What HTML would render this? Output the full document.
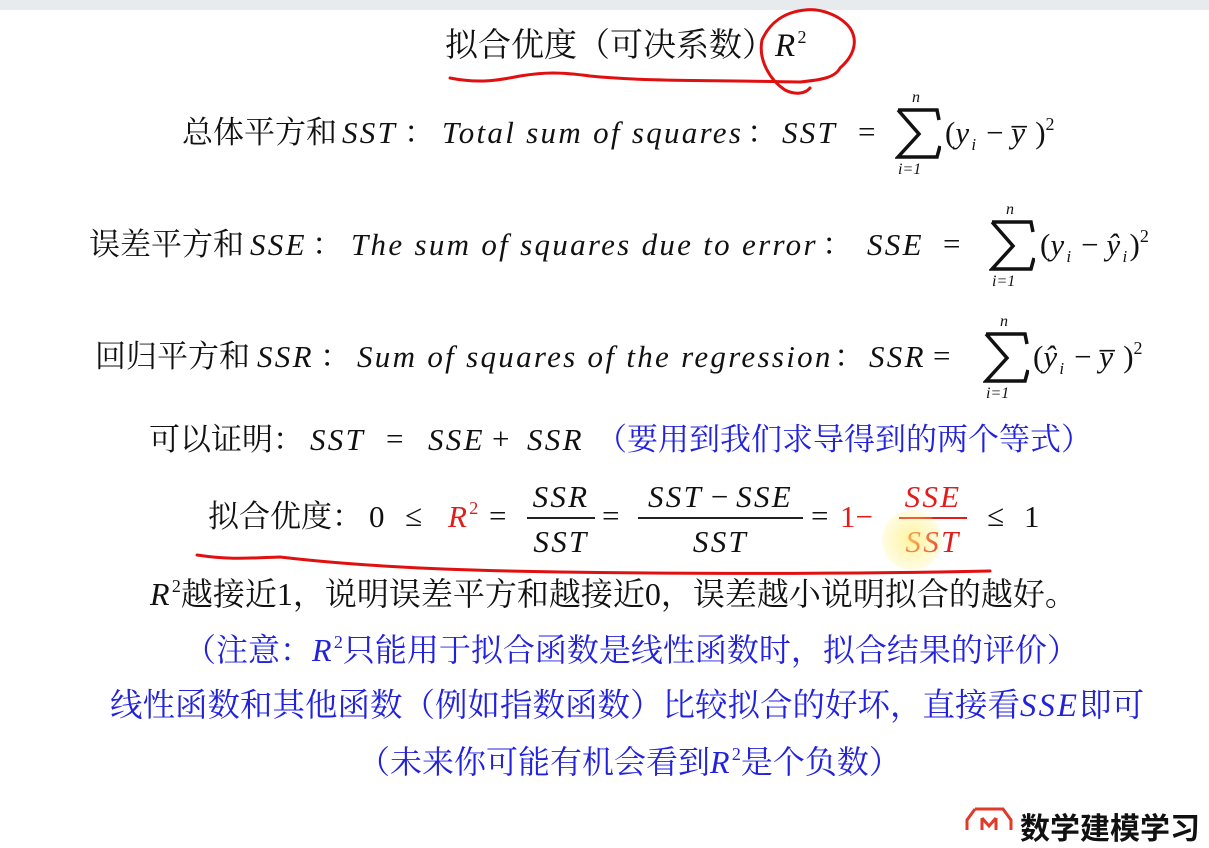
<!DOCTYPE html>
<html><head><meta charset="utf-8"><style>
body{margin:0;width:1209px;height:826px;background:#fff;position:relative;overflow:hidden;font-family:"Liberation Serif","Noto Serif CJK SC",serif;color:#111}
.top{position:absolute;left:0;top:0;width:1209px;height:10px;background:#e8ebee}
.r{position:absolute;white-space:nowrap;font-size:31px;line-height:1}
i{font-family:"Liberation Serif",serif;font-style:italic;letter-spacing:2.3px}
.b{color:#2222dd}.red{color:#e21b1b}
.sm{position:absolute;font-size:16px;line-height:1;font-style:italic;font-family:"Liberation Serif",serif;white-space:nowrap}
.frac{position:absolute;text-align:center;font-size:31px;line-height:1}
.frac .n{border-bottom:2px solid #222;padding:0 2px 5px}
.frac .d{padding-top:7px}
sup{font-size:18px;vertical-align:13px;line-height:0}
sub{font-size:17px;line-height:0}
</style></head><body>
<div class="top"></div>

<div class="r" style="left:445px;top:30px;font-size:33px">拟合优度（可决系数）<i>R</i><sup>2</sup></div>

<!-- row2 -->
<div class="r" style="left:182px;top:117px">总体平方和</div>
<div class="r" style="left:342px;top:117px"><i>SST</i></div>
<div class="r" style="left:404px;top:117px">：</div>
<div class="r" style="left:442px;top:117px"><i>Total sum of squares</i></div>
<div class="r" style="left:747px;top:117px">：</div>
<div class="r" style="left:782px;top:117px"><i>SST</i></div>
<div class="r" style="left:858px;top:116px">=</div>
<div class="sm" style="left:912px;top:90px">n</div>
<svg style="position:absolute;left:895px;top:108px" width="46" height="51"><path d="M3 2 H42 L44 12 M3 2 L24 26 L3 49 H42 L45 38" fill="none" stroke="#111" stroke-width="3.5"/></svg>
<div class="sm" style="left:898px;top:162px">i=1</div>
<div class="r" style="left:945px;top:117px">(<i>y<sub>i</sub></i> − <i>y̅</i> )<sup>2</sup></div>

<!-- row3 -->
<div class="r" style="left:89px;top:229px">误差平方和</div>
<div class="r" style="left:250px;top:229px"><i>SSE</i></div>
<div class="r" style="left:312px;top:229px">：</div>
<div class="r" style="left:351px;top:229px"><i>The sum of squares due to error</i></div>
<div class="r" style="left:822px;top:229px">：</div>
<div class="r" style="left:867px;top:229px"><i>SSE</i></div>
<div class="r" style="left:943px;top:228px">=</div>
<div class="sm" style="left:1006px;top:202px">n</div>
<svg style="position:absolute;left:989px;top:220px" width="46" height="51"><path d="M3 2 H42 L44 12 M3 2 L24 26 L3 49 H42 L45 38" fill="none" stroke="#111" stroke-width="3.5"/></svg>
<div class="sm" style="left:992px;top:274px">i=1</div>
<div class="r" style="left:1040px;top:229px">(<i>y<sub>i</sub></i> − <i>ŷ<sub>i</sub></i>)<sup>2</sup></div>

<!-- row4 -->
<div class="r" style="left:95px;top:341px">回归平方和</div>
<div class="r" style="left:257px;top:341px"><i>SSR</i></div>
<div class="r" style="left:320px;top:341px">：</div>
<div class="r" style="left:357px;top:341px"><i>Sum of squares of the regression</i></div>
<div class="r" style="left:834px;top:341px">：</div>
<div class="r" style="left:869px;top:341px"><i>SSR</i></div>
<div class="r" style="left:933px;top:340px">=</div>
<div class="sm" style="left:1000px;top:314px">n</div>
<svg style="position:absolute;left:983px;top:332px" width="46" height="51"><path d="M3 2 H42 L44 12 M3 2 L24 26 L3 49 H42 L45 38" fill="none" stroke="#111" stroke-width="3.5"/></svg>
<div class="sm" style="left:986px;top:386px">i=1</div>
<div class="r" style="left:1033px;top:341px">(<i>ŷ<sub>i</sub></i> − <i>y̅</i> )<sup>2</sup></div>

<!-- row5 -->
<div class="r" style="left:149px;top:424px">可以证明：</div>
<div class="r" style="left:310px;top:424px"><i>SST</i></div>
<div class="r" style="left:386px;top:423px">=</div>
<div class="r" style="left:428px;top:424px"><i>SSE</i></div>
<div class="r" style="left:492px;top:423px">+</div>
<div class="r" style="left:527px;top:424px"><i>SSR</i></div>
<div class="r b" style="left:596px;top:424px">（要用到我们求导得到的两个等式）</div>

<!-- row6 -->
<div class="r" style="left:208px;top:501px">拟合优度：</div>
<div class="r" style="left:369px;top:501px">0</div>
<div class="r" style="left:405px;top:500px">≤</div>
<div class="r red" style="left:448px;top:501px"><i>R</i><sup>2</sup></div>
<div class="r" style="left:489px;top:500px">=</div>
<div class="frac" style="left:527px;top:481px;width:68px"><div class="n"><i>SSR</i></div><div class="d"><i>SST</i></div></div>
<div class="r" style="left:602px;top:500px">=</div>
<div class="frac" style="left:638px;top:481px;width:165px"><div class="n"><i>SST</i> − <i>SSE</i></div><div class="d"><i>SST</i></div></div>
<div class="r" style="left:811px;top:500px">=</div>
<div class="r red" style="left:840px;top:501px">1−</div>
<div class="frac red" style="left:899px;top:481px;width:68px"><div class="n" style="border-color:#e21b1b"><i>SSE</i></div><div class="d"><i>SST</i></div></div>
<div class="r" style="left:987px;top:500px">≤</div>
<div class="r" style="left:1024px;top:501px">1</div>

<div class="r" style="left:150px;top:578px;font-size:32px"><i>R</i><sup>2</sup>越接近1，说明误差平方和越接近0，误差越小说明拟合的越好。</div>
<div class="r b" style="left:184px;top:634px;font-size:32px">（注意：<i>R</i><sup>2</sup>只能用于拟合函数是线性函数时，拟合结果的评价）</div>
<div class="r b" style="left:110px;top:690px;font-size:32.5px">线性函数和其他函数（例如指数函数）比较拟合的好坏，直接看<i>SSE</i>即可</div>
<div class="r b" style="left:358px;top:746px;font-size:32px">（未来你可能有机会看到<i>R</i><sup>2</sup>是个负数）</div>

<svg style="position:absolute;left:0;top:0" width="1209" height="826" fill="none" stroke="#e01010" stroke-width="3" stroke-linecap="round">
<path d="M450 78 C480 84 500 80 520 76 C545 72 560 72 590 76 C650 82 720 80 800 82"/>
<path d="M800 82 C820 80 835 78 840 68 C855 55 858 40 850 28 C840 15 820 8 805 10 C785 12 770 22 762 40 C758 60 770 80 785 90 C795 95 805 94 810 88"/>
<path d="M197 555 C230 560 250 558 280 557 C340 564 420 570 560 572 C700 574 850 574 990 571"/>
</svg>
<div style="position:absolute;left:882px;top:510px;width:60px;height:60px;border-radius:50%;background:radial-gradient(rgba(255,240,120,.7),rgba(255,245,160,0))"></div>
<svg style="position:absolute;left:965px;top:806px" width="48" height="24"><path d="M10 3 H38 L46 14 V24 M10 3 L2 14 V24" fill="none" stroke="#e03a2a" stroke-width="3"/><path d="M17 12 V24 M31 12 V24 M17 12 L24 20 L31 12" fill="none" stroke="#e03a2a" stroke-width="3"/></svg>
<div class="r" style="left:1020px;top:811px;font-family:'Noto Sans CJK SC',sans-serif;font-weight:bold;font-size:30px">数学建模学习</div>
</body></html>
